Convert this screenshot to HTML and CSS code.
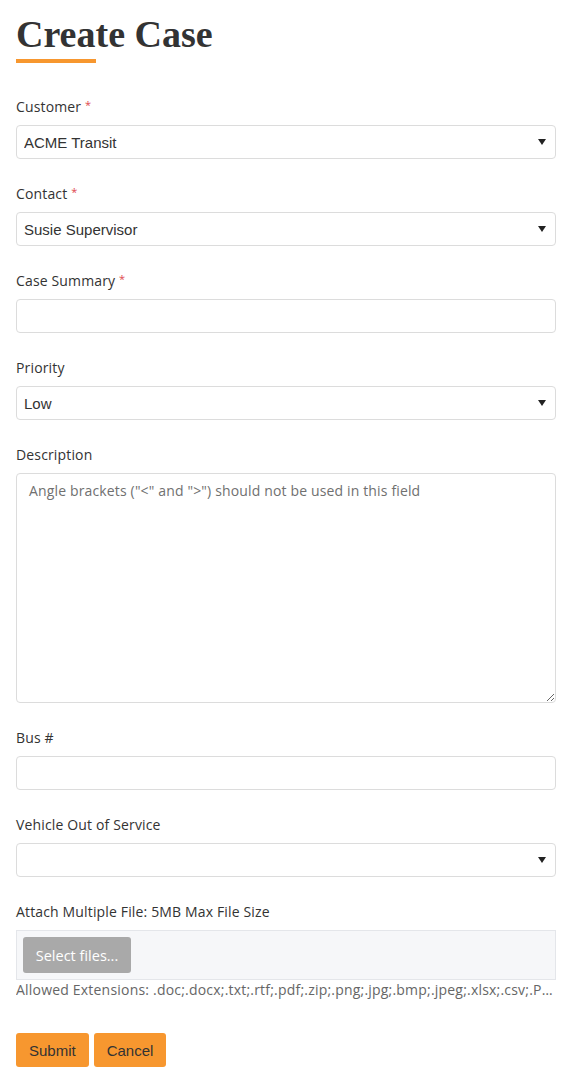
FILE: index.html
```html
<!DOCTYPE html>
<html>
<head>
<meta charset="utf-8">
<link rel="stylesheet" href="styles.css">
</head>
<body>
<div class="page">
  <h1 class="title">Create Case</h1>
  <div class="title-bar"></div>

  <form class="form">
    <div class="field">
      <label class="label">Customer <span class="req">*</span></label>
      <div class="select-wrap"><select class="control"><option>ACME Transit</option></select></div>
    </div>
    <div class="field">
      <label class="label">Contact <span class="req">*</span></label>
      <div class="select-wrap"><select class="control"><option>Susie Supervisor</option></select></div>
    </div>
    <div class="field">
      <label class="label">Case Summary <span class="req">*</span></label>
      <input class="control" type="text">
    </div>
    <div class="field">
      <label class="label">Priority</label>
      <div class="select-wrap"><select class="control"><option>Low</option></select></div>
    </div>
    <div class="field">
      <label class="label">Description</label>
      <textarea class="control textarea" placeholder="Angle brackets (&quot;&lt;&quot; and &quot;&gt;&quot;) should not be used in this field"></textarea>
    </div>
    <div class="field">
      <label class="label">Bus #</label>
      <input class="control" type="text">
    </div>
    <div class="field">
      <label class="label">Vehicle Out of Service</label>
      <div class="select-wrap"><select class="control"><option></option></select></div>
    </div>
    <div class="field field-file">
      <label class="label">Attach Multiple File: 5MB Max File Size</label>
      <div class="file-box"><button type="button" class="file-btn">Select files...</button></div>
      <div class="hint">Allowed Extensions: .doc;.docx;.txt;.rtf;.pdf;.zip;.png;.jpg;.bmp;.jpeg;.xlsx;.csv;.PPT;.PPTX</div>
    </div>
    <div class="actions">
      <button type="button" class="btn">Submit</button>
      <button type="button" class="btn">Cancel</button>
    </div>
  </form>
</div>
</body>
</html>
```

FILE: styles.css
```css
* { box-sizing: border-box; }
html, body { margin: 0; padding: 0; background: #fff; }
body { font-family: "Open Sans", "Noto Sans", sans-serif; color: #333; }

.page { padding: 12px 11px 0 16px; }

.title {
  margin: 0;
  font-family: "Liberation Serif", "Times New Roman", serif;
  font-weight: bold;
  font-size: 38px;
  line-height: 44px;
  color: #333;
}
.title-bar {
  width: 80px;
  height: 4px;
  background: #f7972f;
  margin-top: 3px;
}

.form { display: flex; flex-direction: column; margin-top: 34px; }

.field { display: flex; flex-direction: column; margin-bottom: 25px; }
.label {
  display: block;
  height: 20px;
  font-size: 14px;
  line-height: 20px;
  letter-spacing: 0.15px;
  color: #333;
  margin-bottom: 8px;
}
.req { color: #e0484e; font-size: 11px; line-height: 0; vertical-align: 3px; }

.control {
  display: block;
  width: 100%;
  height: 34px;
  border: 1px solid #dcdcdc;
  border-radius: 4px;
  background: #fff;
  font-family: "Liberation Sans", Arial, sans-serif;
  font-size: 15px;
  color: #333;
  padding: 0 7px;
  outline: none;
}
select.control { appearance: none; -webkit-appearance: none; }

.select-wrap { position: relative; height: 34px; }
.select-wrap::after {
  content: "";
  position: absolute;
  right: 10px;
  top: 14px;
  border-left: 4px solid transparent;
  border-right: 4px solid transparent;
  border-top: 6px solid #222;
}

.textarea {
  height: 230px;
  padding: 7px 12px;
  resize: vertical;
  font-family: "Open Sans", "Noto Sans", sans-serif;
  font-size: 14px;
  line-height: 20px;
  letter-spacing: 0.15px;
}
.textarea::placeholder { color: #707070; }

.field-file { margin-bottom: 0; }
.file-box {
  height: 50px;
  border: 1px solid #e4e6ea;
  background: #f6f7f9;
  padding: 6px;
  display: flex;
  align-items: flex-start;
}
.file-btn {
  height: 36px;
  width: 108px;
  border: none;
  border-radius: 3px;
  background: #a9a9a9;
  color: #fff;
  font-family: "Open Sans", "Noto Sans", sans-serif;
  font-size: 14.5px;
  padding: 0;
}
.hint {
  margin-top: 0;
  font-size: 14px;
  line-height: 20px;
  letter-spacing: 0.2px;
  color: #666;
  white-space: nowrap;
  overflow: hidden;
  text-overflow: ellipsis;
}

.actions { display: flex; gap: 5px; margin-top: 33px; }
.btn {
  height: 34px;
  padding: 0 13px;
  border: none;
  border-radius: 3px;
  background: #f7972f;
  color: #333;
  font-family: "Liberation Sans", Arial, sans-serif;
  font-size: 15px;
}
```
